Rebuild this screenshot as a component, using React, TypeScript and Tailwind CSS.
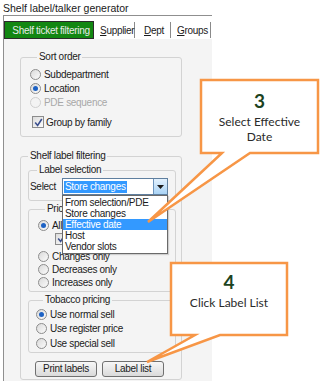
import React from "react";

type Kids = { children?: React.ReactNode };

const Radio = ({ checked, disabled }: { checked?: boolean; disabled?: boolean }) => (
  <span
    className={`flex h-[11px] w-[11px] shrink-0 items-center justify-center rounded-full border ${
      disabled ? "border-[#cfcfcf] bg-[#f3f3f3]" : "border-[#8c8c8c] bg-gradient-to-br from-[#dadada] to-[#fbfbfb]"
    }`}
  >
    {checked && <span className="h-[5px] w-[5px] rounded-full bg-[#1d62c4]" />}
  </span>
);

const Check = ({ checked }: { checked?: boolean }) => (
  <span className="flex h-[12px] w-[12px] shrink-0 items-center justify-center border border-[#8c8c8c] bg-gradient-to-br from-[#dcdcdc] to-[#fcfcfc]">
    {checked && (
      <svg width="9" height="9" viewBox="0 0 9 9">
        <path d="M1.2 4.6 L3.6 7.4 L7.8 1" fill="none" stroke="#3b4f8e" strokeWidth="1.6" />
      </svg>
    )}
  </span>
);

const Option = ({ label, checked, disabled, h = "h-[14px]" }: { label: string; checked?: boolean; disabled?: boolean; h?: string }) => (
  <div className={`flex ${h} items-center gap-[3px]`}>
    <Radio checked={checked} disabled={disabled} />
    <span className={disabled ? "text-[#a8a8a8]" : ""}>{label}</span>
  </div>
);

const Group = ({ title, className, children }: Kids & { title: string; className: string }) => (
  <fieldset className={`min-w-0 rounded-[3px] border border-[#d3d3d3] ${className}`}>
    <legend className="ml-[7px] px-[2px] leading-[12px]">{title}</legend>
    {children}
  </fieldset>
);

const Tab = ({ first, rest, w, pl }: { first: string; rest: string; w: string; pl: string }) => (
  <div className={`flex h-[16px] items-center border-r border-[#8a8a8a] ${w} ${pl}`}>
    <span className="underline underline-offset-[1px]">{first}</span>
    <span>{rest}</span>
  </div>
);

const dropItems = ["From selection/PDE", "Store changes", "Effective date", "Host", "Vendor slots"];

export default function App() {
  return (
    <div className="relative h-[381px] w-[323px] overflow-hidden bg-white font-['Liberation_Sans',Arial,sans-serif] text-[10px] tracking-[-0.3px] text-[#1b1b1b]">
      <div className="w-[213px]">
        <div className="h-[15px] pl-[3px] pt-[2px] text-[10.5px] leading-[12px] tracking-normal text-[#202020]">
          Shelf label/talker generator
        </div>

        <div className="ml-[3px] w-[209px] border-l border-t border-[#8f8f8f]">
          <div className="flex h-[23px] items-start bg-white pt-[5px]">
            <div className="flex h-[18px] w-[90px] items-center justify-center border border-[#2b2b2b] bg-[#128712] pl-[4px] text-[#eaeaea]">
              Shelf ticket filtering
            </div>
            <div className="flex pt-[1px]">
              <Tab first="S" rest="upplier" w="w-[41px]" pl="pl-[6px]" />
              <Tab first="D" rest="ept" w="w-[36px]" pl="pl-[9px]" />
              <Tab first="G" rest="roups" w="w-[40px]" pl="pl-[6px]" />
            </div>
          </div>

          <div className="bg-[#f4f4f4] pb-[4px] pt-[12px]">
            <Group title="Sort order" className="ml-[16px] w-[162px] pb-[7px] pl-[9px] pt-[4px]">
              <Option label="Subdepartment" />
              <Option label="Location" checked />
              <Option label="PDE sequence" disabled />
              <div className="mt-[6px] flex h-[14px] items-center gap-[2px] pl-[2px]">
                <Check checked />
                <span>Group by family</span>
              </div>
            </Group>

            <Group title="Shelf label filtering" className="ml-[16px] mt-[13px] w-[162px] pb-[2px]">
              <Group title="Label selection" className="ml-[7px] mt-[2px] w-[148px] pb-[5px] pl-[1px] pt-[2px]">
                <div className="flex h-[17px] items-center">
                  <span className="w-[32px]">Select</span>
                  <div className="relative z-10 flex h-[17px] w-[106px] items-center border border-[#5f7f9f] bg-white">
                    <span className="ml-[1px] bg-[#3399ff] px-[1px] leading-[12px] text-white">Store changes</span>
                    <div className="absolute right-0 top-0 flex h-[15px] w-[14px] items-center justify-center border-l border-[#6d94bd] bg-gradient-to-b from-[#e3f1fd] to-[#a9d3f5]">
                      <svg width="7" height="4" viewBox="0 0 7 4">
                        <path d="M0 0 H7 L3.5 4 Z" fill="#1a1a1a" />
                      </svg>
                    </div>
                    <div className="absolute left-[-1px] top-[16px] w-[106px] border border-[#6a6a6a] bg-white py-[1px] shadow-[1px_1px_1px_rgba(0,0,0,0.15)]">
                      {dropItems.map((item) => (
                        <div
                          key={item}
                          className={`h-[11px] pl-[2px] leading-[11px] ${item === "Effective date" ? "bg-[#3399ff] text-white" : ""}`}
                        >
                          {item}
                        </div>
                      ))}
                    </div>
                  </div>
                </div>
              </Group>

              <Group title="Price c" className="ml-[7px] mt-[2px] w-[148px] pb-[2px] pl-[9px] pt-[4px]">
                <Option label="All" checked h="h-[13px]" />
                <div className="flex h-[13px] items-center pl-[17px]">
                  <Check checked />
                </div>
                <div className="mt-[5px]">
                  <Option label="Changes only" h="h-[13px]" />
                  <Option label="Decreases only" h="h-[13px]" />
                  <Option label="Increases only" h="h-[13px]" />
                </div>
              </Group>

              <Group title="Tobacco pricing" className="ml-[7px] mt-[2px] w-[148px] pb-[1px] pl-[7px] pt-[1px]">
                <Option label="Use normal sell" checked h="h-[14.5px]" />
                <Option label="Use register price" h="h-[14.5px]" />
                <Option label="Use special sell" h="h-[14.5px]" />
              </Group>

              <div className="mt-[8px] flex gap-[5px] pl-[14px]">
                <button className="h-[16px] w-[62px] rounded-[3px] border border-[#707070] bg-gradient-to-b from-[#f7f7f7] to-[#dadada] leading-none">
                  Print labels
                </button>
                <button className="h-[16px] w-[62px] rounded-[3px] border border-[#707070] bg-gradient-to-b from-[#f7f7f7] to-[#dadada] leading-none">
                  Label list
                </button>
              </div>
            </Group>
          </div>
        </div>
      </div>

      <svg className="pointer-events-none absolute left-0 top-0 z-20" width="323" height="381" viewBox="0 0 323 381">
        <polygon
          points="201,80 318,80 318,153 250,153 148,222 222,153 201,153"
          fill="white"
          stroke="#f79646"
          strokeWidth="2.5"
        />
        <polygon
          points="171,263 287,263 287,335 220,335 147,362 195,335 171,335"
          fill="white"
          stroke="#f79646"
          strokeWidth="2.5"
        />
      </svg>

      <div className="absolute left-[201px] top-[88px] z-30 flex w-[117px] flex-col items-center font-['Lato',sans-serif] text-[12px] tracking-normal text-[#2a2a2a]">
        <span className="h-[26px] text-[19px] font-bold leading-[26px] text-[#1c431e]">3</span>
        <span className="leading-[15px]">Select Effective</span>
        <span className="leading-[15px]">Date</span>
      </div>

      <div className="absolute left-[171px] top-[269px] z-30 flex w-[116px] flex-col items-center font-['Lato',sans-serif] text-[12px] tracking-normal text-[#2a2a2a]">
        <span className="h-[26px] text-[19px] font-bold leading-[26px] text-[#1c431e]">4</span>
        <span className="leading-[15px]">Click Label List</span>
      </div>
    </div>
  );
}
